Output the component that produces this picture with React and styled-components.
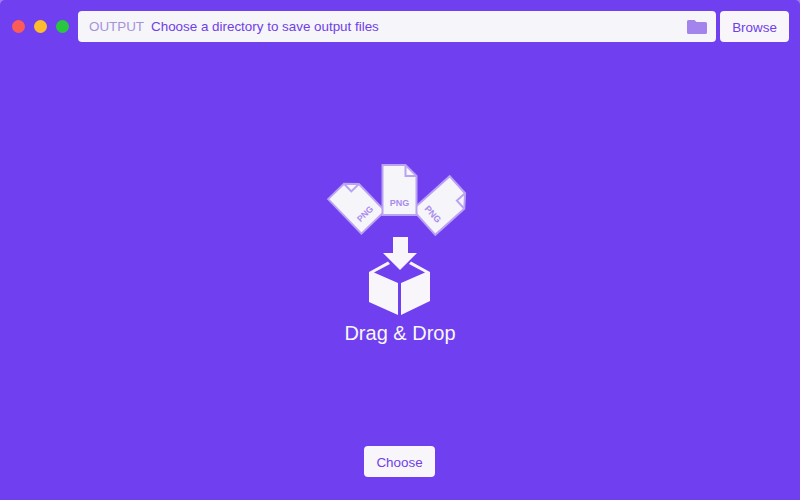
import styled, { createGlobalStyle } from 'styled-components';

const GlobalStyle = createGlobalStyle`
    html, body {
        margin: 0;
        padding: 0;
        background: #9c7ff4;
    }
    * {
        box-sizing: border-box;
    }
`

const Window = styled.div`
    width: 800px;
    height: 500px;
    background-color: #703ff0;
    border-radius: 5px 5px 0 0;
    display: flex;
    flex-direction: column;
    align-items: center;
    font-family: "Liberation Sans", Arial, sans-serif;
    overflow: hidden;
`

const Toolbar = styled.div`
    width: 100%;
    height: 54px;
    padding: 11px 11px 12px 12px;
    display: flex;
    align-items: stretch;
`

const Lights = styled.div`
    display: flex;
    align-items: center;
    gap: 9px;
    margin-right: 9px;
`

const Light = styled.span`
    width: 13px;
    height: 13px;
    border-radius: 50%;
    background-color: ${props => props.$color};
`

const PathField = styled.div`
    flex: 1;
    display: flex;
    align-items: center;
    padding: 0 9px 0 11px;
    border-radius: 4px;
    background-color: #f6f5f9;
    font-size: 13.4px;
    margin-right: 4px;
`

const FieldLabel = styled.span`
    color: #a593d9;
    margin-right: 7px;
`

const FieldText = styled.span`
    flex: 1;
    color: #6f40e8;
`

const Button = styled.button`
    border: none;
    border-radius: 4px;
    background-color: #f8f6fb;
    color: #6f40e8;
    font-family: inherit;
    font-size: 13.4px;
    padding: 1px 0 0;
    width: ${props => props.$width}px;
`

const DropArea = styled.div`
    flex: 1;
    display: flex;
    flex-direction: column;
    align-items: center;
    padding-top: 110px;
`

const DropLabel = styled.div`
    margin-top: 4px;
    color: #f8f6fb;
    font-size: 20px;
    line-height: 26px;
`

const ChooseRow = styled.div`
    height: 54px;
    display: flex;
    align-items: flex-start;
    justify-content: center;
    padding-right: 1px;
`

const ChooseButton = styled(Button)`
    height: 31px;
`

function FolderIcon() {
    return (
        <svg width="20" height="14" viewBox="0 0 20 14">
            <path d="M0 1.5 Q0 0 1.5 0 H7.5 L9.5 2 H18.5 Q20 2 20 3.5 V12.5 Q20 14 18.5 14 H1.5 Q0 14 0 12.5 Z" fill="#a284ec" />
        </svg>
    );
}

function PngFile({ transform }) {
    return (
        <g transform={transform}>
            <path d="M-17 -25 H6 L17 -14 V25 H-17 Z" fill="#f6f5f9" stroke="#b9a3f2" strokeWidth="2" />
            <path d="M6 -25 V-14 H17" fill="none" stroke="#b9a3f2" strokeWidth="2" />
            <text x="0" y="16" textAnchor="middle" fontSize="9" fontWeight="700" fill="#a88cf0" fontFamily="Liberation Sans, Arial, sans-serif">PNG</text>
        </g>
    );
}

function DropGraphic() {
    return (
        <svg width="160" height="152" viewBox="-10 0 160 152">
            <PngFile transform="translate(26.5 41) rotate(-44) scale(0.96)" />
            <PngFile transform="translate(112.5 41.5) rotate(48)" />
            <PngFile transform="translate(69.5 26)" />
            <path d="M63 73 H78 V89 H87 L70 106 L53 89 H63 Z" fill="#f8f6fb" />
            <path d="M39 108 L58 97.5 L60 100 L44 108.5 L68 119 V151 L39 138 Z" fill="#f8f6fb" />
            <path d="M100 108 L81 97.5 L79 100 L95 108.5 L71 119 V151 L100 137 Z" fill="#f8f6fb" />
        </svg>
    );
}

export default function App() {
    return (
        <Window>
            <GlobalStyle />
            <Toolbar>
                <Lights>
                    <Light $color="#fc5b57" />
                    <Light $color="#fdbc2e" />
                    <Light $color="#29c740" />
                </Lights>
                <PathField>
                    <FieldLabel>OUTPUT</FieldLabel>
                    <FieldText>Choose a directory to save output files</FieldText>
                    <FolderIcon />
                </PathField>
                <Button $width={69}>Browse</Button>
            </Toolbar>
            <DropArea>
                <DropGraphic />
                <DropLabel>Drag &amp; Drop</DropLabel>
            </DropArea>
            <ChooseRow>
                <ChooseButton $width={71}>Choose</ChooseButton>
            </ChooseRow>
        </Window>
    );
}
